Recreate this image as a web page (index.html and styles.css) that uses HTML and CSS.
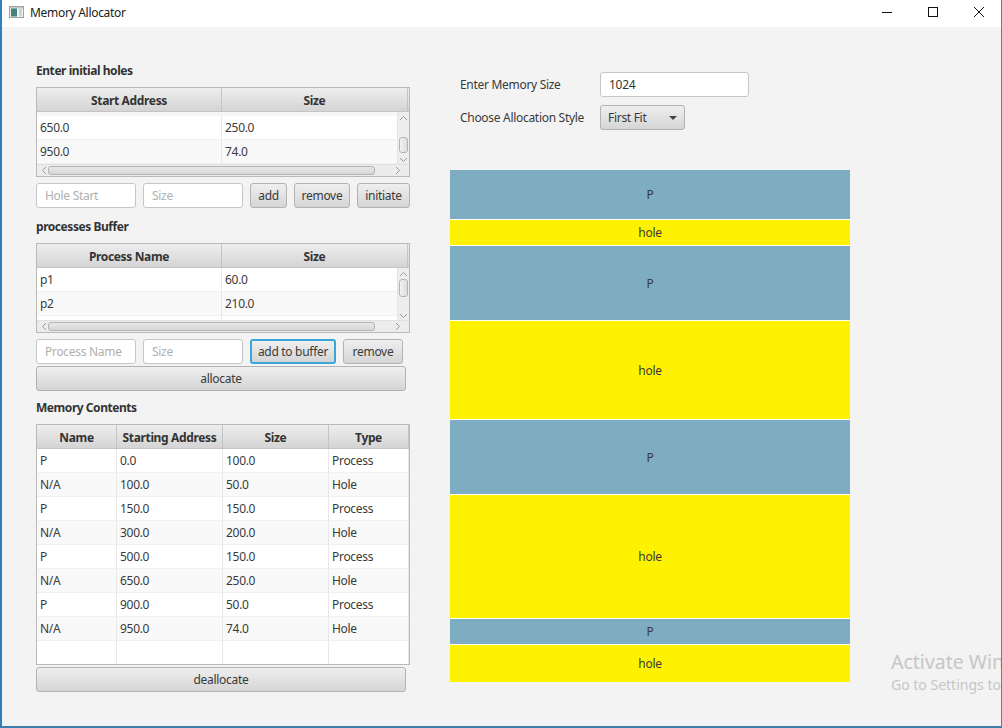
FILE: index.html
```html
<!DOCTYPE html>
<html lang="en">
<head>
    <meta charset="UTF-8">
    <meta name="viewport" content="width=device-width, initial-scale=1.0">
    <title>Memory Allocator</title>
    <link rel="stylesheet" href="styles.css">
</head>
<body>
    <div class="window">
        <div class="titlebar">
            <svg class="app-icon" width="15" height="12" viewBox="0 0 15 12">
                <rect x="0.5" y="0.5" width="14" height="11" fill="#f2f4f4" stroke="#9aa4a6"/>
                <rect x="1" y="1" width="13" height="1.500" fill="#c3cbce"/>
                <rect x="2" y="2.500" width="6" height="8" fill="#46837d"/>
                <rect x="10" y="2.500" width="3" height="8" fill="#c9d3d8"/>
            </svg>
            <span class="title">Memory Allocator</span>
            <div class="controls">
                <svg width="12" height="12" viewBox="0 0 12 12"><path d="M1 6.500h10" stroke="#111" fill="none"/></svg>
                <svg width="12" height="12" viewBox="0 0 12 12"><rect x="1.500" y="1.500" width="9" height="9" stroke="#111" fill="none"/></svg>
                <svg width="12" height="12" viewBox="0 0 12 12"><path d="M1 1l10 10M11 1L1 11" stroke="#111" fill="none"/></svg>
            </div>
        </div>

        <div class="main">
            <div class="left">
                <div class="heading">Enter initial holes</div>
                <div class="table">
                    <div class="thead two-col">
                        <div>Start Address</div>
                        <div>Size</div>
                    </div>
                    <div class="scroll-body">
                        <div class="rows offset">
                            <div class="row two-col"><div>650.0</div><div>250.0</div></div>
                            <div class="row two-col even"><div>950.0</div><div>74.0</div></div>
                        </div>
                        <div class="vbar">
                            <svg width="9" height="6" viewBox="0 0 9 6"><path d="M1 5l3.500-3.500L8 5" stroke="#999" fill="none"/></svg>
                            <div class="vthumb low"></div>
                            <svg width="9" height="6" viewBox="0 0 9 6"><path d="M1 1l3.500 3.500L8 1" stroke="#999" fill="none"/></svg>
                        </div>
                    </div>
                    <div class="hbar">
                        <svg width="6" height="9" viewBox="0 0 6 9"><path d="M5 1L1.500 4.500 5 8" stroke="#999" fill="none"/></svg>
                        <div class="hthumb"></div>
                        <svg width="6" height="9" viewBox="0 0 6 9"><path d="M1 1l3.500 3.500L1 8" stroke="#999" fill="none"/></svg>
                    </div>
                </div>
                <div class="form-row">
                    <input class="field" type="text" placeholder="Hole Start">
                    <input class="field" type="text" placeholder="Size">
                    <button class="btn w-add">add</button>
                    <button class="btn w-remove">remove</button>
                    <button class="btn w-initiate">initiate</button>
                </div>

                <div class="heading second">processes Buffer</div>
                <div class="table">
                    <div class="thead two-col">
                        <div>Process Name</div>
                        <div>Size</div>
                    </div>
                    <div class="scroll-body">
                        <div class="rows">
                            <div class="row two-col"><div>p1</div><div>60.0</div></div>
                            <div class="row two-col even"><div>p2</div><div>210.0</div></div>
                            <div class="row two-col"><div></div><div></div></div>
                        </div>
                        <div class="vbar">
                            <svg width="9" height="6" viewBox="0 0 9 6"><path d="M1 5l3.500-3.500L8 5" stroke="#999" fill="none"/></svg>
                            <div class="vthumb"></div>
                            <svg width="9" height="6" viewBox="0 0 9 6"><path d="M1 1l3.500 3.500L8 1" stroke="#999" fill="none"/></svg>
                        </div>
                    </div>
                    <div class="hbar">
                        <svg width="6" height="9" viewBox="0 0 6 9"><path d="M5 1L1.500 4.500 5 8" stroke="#999" fill="none"/></svg>
                        <div class="hthumb"></div>
                        <svg width="6" height="9" viewBox="0 0 6 9"><path d="M1 1l3.500 3.500L1 8" stroke="#999" fill="none"/></svg>
                    </div>
                </div>
                <div class="form-row">
                    <input class="field" type="text" placeholder="Process Name">
                    <input class="field" type="text" placeholder="Size">
                    <button class="btn w-buffer focused">add to buffer</button>
                    <button class="btn w-remove2">remove</button>
                </div>
                <button class="btn wide allocate">allocate</button>

                <div class="heading third">Memory Contents</div>
                <div class="table contents">
                    <div class="thead four-col">
                        <div>Name</div>
                        <div>Starting Address</div>
                        <div>Size</div>
                        <div>Type</div>
                    </div>
                    <div class="row four-col"><div>P</div><div>0.0</div><div>100.0</div><div>Process</div></div>
                    <div class="row four-col even"><div>N/A</div><div>100.0</div><div>50.0</div><div>Hole</div></div>
                    <div class="row four-col"><div>P</div><div>150.0</div><div>150.0</div><div>Process</div></div>
                    <div class="row four-col even"><div>N/A</div><div>300.0</div><div>200.0</div><div>Hole</div></div>
                    <div class="row four-col"><div>P</div><div>500.0</div><div>150.0</div><div>Process</div></div>
                    <div class="row four-col even"><div>N/A</div><div>650.0</div><div>250.0</div><div>Hole</div></div>
                    <div class="row four-col"><div>P</div><div>900.0</div><div>50.0</div><div>Process</div></div>
                    <div class="row four-col even"><div>N/A</div><div>950.0</div><div>74.0</div><div>Hole</div></div>
                    <div class="row four-col"><div></div><div></div><div></div><div></div></div>
                </div>
                <button class="btn wide deallocate">deallocate</button>
            </div>

            <div class="right">
                <div class="settings">
                    <div class="setting">
                        <label class="setting-label">Enter Memory Size</label>
                        <input class="field memory" type="text" value="1024">
                    </div>
                    <div class="setting">
                        <label class="setting-label">Choose Allocation Style</label>
                        <div class="btn select">First Fit<span class="arrow"></span></div>
                    </div>
                </div>
                <div class="memory-map">
                    <div class="block process" style="height: 49px">P</div>
                    <div class="block hole" style="height: 25px">hole</div>
                    <div class="block process" style="height: 74px">P</div>
                    <div class="block hole" style="height: 98px">hole</div>
                    <div class="block process" style="height: 74px">P</div>
                    <div class="block hole" style="height: 123px">hole</div>
                    <div class="block process" style="height: 25px">P</div>
                    <div class="block hole" style="height: 37px">hole</div>
                </div>
            </div>
        </div>

        <div class="watermark">
            <div class="wm-big">Activate Windows</div>
            <div class="wm-small">Go to Settings to activate Windows.</div>
        </div>
    </div>
</body>
</html>
```

FILE: styles.css
```css
* {
    box-sizing: border-box;
}
html, body {
    margin: 0;
    height: 100%;
    overflow: hidden;
}
body {
    font-family: "Noto Sans", "Open Sans", sans-serif;
    font-size: 12px;
    letter-spacing: -0.3px;
    color: #3a3a3a;
    background: #fff;
}
.window {
    position: relative;
    width: 1002px;
    height: 728px;
    display: flex;
    flex-direction: column;
    overflow: hidden;
    background: #f3f3f3;
    border-left: 2px solid #2f80bd;
    border-right: 1px solid #4c86ae;
    border-bottom: 2px solid #3f7ea9;
}

/* title bar */
.titlebar {
    height: 27px;
    flex: none;
    display: flex;
    align-items: center;
    padding: 0 0 3px 7px;
    background: #fff;
    color: #222;
}
.app-icon {
    margin-right: 6px;
}
.controls {
    margin-left: auto;
    display: flex;
    gap: 34px;
    padding-right: 16px;
    margin-top: -1px;
}

/* layout */
.main {
    display: flex;
    gap: 40px;
    padding-left: 34px;
}
.left {
    width: 374px;
    padding-top: 36px;
}
.right {
    width: 400px;
}
.heading {
    height: 16px;
    line-height: 16px;
    font-weight: 700;
    margin-bottom: 8px;
    letter-spacing: -0.45px;
    color: #333;
}
.heading.second {
    margin-top: 11px;
}
.heading.third {
    margin-top: 9px;
}

/* tables */
.table {
    height: 90px;
    background: #fff;
    border: 1px solid #b9b9b9;
    display: flex;
    flex-direction: column;
    overflow: hidden;
}
.table.contents {
    height: 241px;
}
.two-col {
    display: grid;
    grid-template-columns: 185px 186px;
}
.four-col {
    display: grid;
    grid-template-columns: 80px 106px 106px 80px;
}
.thead {
    height: 24px;
    flex: none;
    background: linear-gradient(#eeeeee, #d4d4d4);
    border-bottom: 1px solid #c4c4c4;
    font-weight: 700;
    letter-spacing: -0.35px;
    color: #333;
    text-align: center;
    line-height: 25px;
}
.thead > div {
    border-right: 1px solid #c4c4c4;
}
.scroll-body {
    height: 52px;
    display: flex;
    overflow: hidden;
}
.rows {
    width: 360px;
    flex: none;
    overflow: hidden;
}
.rows.offset {
    padding-top: 4px;
    background: #f6f6f6;
}
.row {
    height: 24px;
    flex: none;
    line-height: 23px;
    background: #fff;
    border-bottom: 1px solid #f0f0f0;
}
.row.even {
    background: #f9f9f9;
}
.row > div {
    padding-left: 3px;
    border-right: 1px solid #e8e8e8;
}
.two-col.row {
    grid-template-columns: 185px 175px;
}
.two-col.row > div:last-child {
    border-right: 0;
}

/* scroll bars */
.vbar {
    flex: 1;
    background: #ededed;
    border-left: 1px solid #e4e4e4;
    display: flex;
    flex-direction: column;
    align-items: center;
    padding: 3px 1px 1px 0;
}
.vthumb {
    width: 9px;
    height: 18px;
    margin-top: 2px;
    background: linear-gradient(to right, #f2f2f2, #dddddd);
    border: 1px solid #b4b4b4;
    border-radius: 3px;
}
.vthumb.low {
    height: 16px;
    margin-top: 16px;
}
.vbar svg:last-child {
    margin-top: auto;
}
.hbar {
    flex: 1;
    display: flex;
    align-items: center;
    padding: 0 8px 0 4px;
    background: #ececec;
    border-top: 1px solid #e0e0e0;
}
.hthumb {
    width: 327px;
    height: 9px;
    margin-left: 1px;
    background: linear-gradient(#e8e8e8, #d6d6d6);
    border: 1px solid #b4b4b4;
    border-radius: 3px;
}
.hbar svg:last-child {
    margin-left: auto;
}

/* controls */
.form-row {
    display: flex;
    gap: 7px;
    margin-top: 6px;
}
.field {
    width: 100px;
    height: 25px;
    padding: 0 8px;
    font: inherit;
    letter-spacing: inherit;
    color: #333;
    background: #fff;
    border: 1px solid #c6c6c6;
    border-radius: 3px;
    outline: none;
}
.field::placeholder {
    color: #b0b0b0;
}
.btn {
    height: 25px;
    padding: 0;
    font: inherit;
    letter-spacing: inherit;
    color: #3a3a3a;
    background: linear-gradient(#efefef, #d5d5d5);
    border: 1px solid #b2b2b2;
    border-radius: 3px;
}
.w-add {
    width: 37px;
}
.w-remove {
    width: 56px;
}
.w-initiate {
    width: 53px;
}
.w-buffer {
    width: 86px;
}
.w-remove2 {
    width: 60px;
}
.focused {
    border: 2px solid #3ba6d8;
}
.wide {
    display: block;
    width: 370px;
}
.allocate, .deallocate {
    margin-top: 2px;
}

/* right side */
.settings {
    display: flex;
    flex-direction: column;
    gap: 8px;
    margin-top: 45px;
    padding-left: 10px;
}
.setting {
    display: flex;
    align-items: center;
}
.setting-label {
    width: 140px;
}
.field.memory {
    width: 149px;
}
.select {
    width: 85px;
    display: flex;
    align-items: center;
    padding-left: 7px;
}
.arrow {
    margin-left: auto;
    margin-right: 7px;
    border-left: 4px solid transparent;
    border-right: 4px solid transparent;
    border-top: 4px solid #444;
}
.memory-map {
    margin-top: 40px;
    display: flex;
    flex-direction: column;
    gap: 1px;
    background: #fff;
}
.block {
    display: flex;
    align-items: center;
    justify-content: center;
}
.process {
    background: #7eadc2;
}
.hole {
    background: #fff200;
}

/* windows watermark sits over the page */
.watermark {
    position: absolute;
    left: 889px;
    top: 648px;
    white-space: nowrap;
    letter-spacing: 0;
    color: #c6c6c6;
}
.wm-big {
    font-size: 19.5px;
    line-height: 28px;
}
.wm-small {
    font-size: 14px;
    line-height: 18px;
}
```
